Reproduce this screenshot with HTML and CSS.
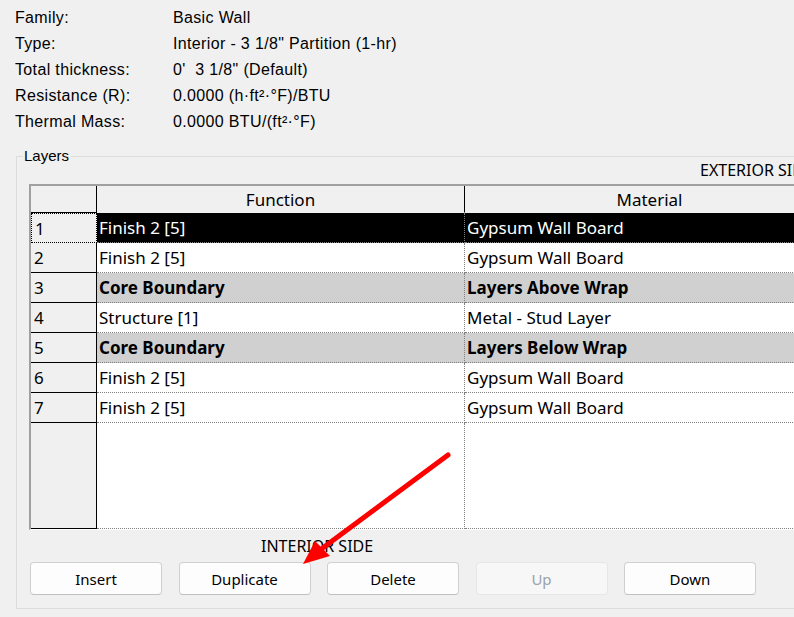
FILE: index.html
```html
<!DOCTYPE html>
<html lang="en">
<head>
  <meta charset="UTF-8">
  <title>Edit Assembly</title>
  <link rel="stylesheet" href="styles.css">
</head>
<body>

<!-- Свойства типа -->
<div class="info">
  <div class="info-row"><span class="info-label">Family:</span><span>Basic Wall</span></div>
  <div class="info-row"><span class="info-label">Type:</span><span>Interior - 3 1/8" Partition (1-hr)</span></div>
  <div class="info-row"><span class="info-label">Total thickness:</span><span>0'&nbsp; 3 1/8" (Default)</span></div>
  <div class="info-row"><span class="info-label">Resistance (R):</span><span>0.0000 (h·ft²·°F)/BTU</span></div>
  <div class="info-row"><span class="info-label">Thermal Mass:</span><span>0.0000 BTU/(ft²·°F)</span></div>
</div>

<!-- Слои -->
<fieldset class="layers">
  <legend>Layers</legend>
  <div class="side side-top">EXTERIOR SIDE</div>

  <table class="grid">
    <tr class="head">
      <th class="num"></th>
      <th class="func">Function</th>
      <th class="mat">Material</th>
    </tr>
    <tr class="selected">
      <td class="num focus">1</td>
      <td class="func">Finish 2 [5]</td>
      <td class="mat">Gypsum Wall Board</td>
    </tr>
    <tr>
      <td class="num">2</td>
      <td class="func">Finish 2 [5]</td>
      <td class="mat">Gypsum Wall Board</td>
    </tr>
    <tr class="core">
      <td class="num">3</td>
      <td class="func">Core Boundary</td>
      <td class="mat">Layers Above Wrap</td>
    </tr>
    <tr>
      <td class="num">4</td>
      <td class="func">Structure [1]</td>
      <td class="mat">Metal - Stud Layer</td>
    </tr>
    <tr class="core">
      <td class="num">5</td>
      <td class="func">Core Boundary</td>
      <td class="mat">Layers Below Wrap</td>
    </tr>
    <tr>
      <td class="num">6</td>
      <td class="func">Finish 2 [5]</td>
      <td class="mat">Gypsum Wall Board</td>
    </tr>
    <tr>
      <td class="num">7</td>
      <td class="func">Finish 2 [5]</td>
      <td class="mat">Gypsum Wall Board</td>
    </tr>
    <tr class="filler">
      <td class="num"></td>
      <td class="func"></td>
      <td class="mat"></td>
    </tr>
  </table>

  <div class="side side-bottom">INTERIOR SIDE</div>

  <div class="buttons">
    <button class="btn">Insert</button>
    <button class="btn">Duplicate</button>
    <button class="btn">Delete</button>
    <button class="btn" disabled>Up</button>
    <button class="btn">Down</button>
  </div>
</fieldset>

<!-- Стрелка-указатель -->
<svg class="arrow" width="794" height="617" viewBox="0 0 794 617">
  <line x1="448" y1="455" x2="320" y2="550" stroke="#ff0000" stroke-width="5" stroke-linecap="round"/>
  <polygon points="303,564 315,541 330,556" fill="#ff0000"/>
</svg>

</body>
</html>
```

FILE: styles.css
```css
/* Основные стили */
body {
  margin: 0;
  width: 794px;
  height: 617px;
  overflow: hidden;
  background-color: #f0f0f0;
  color: #000;
  font-family: "Liberation Sans", Arial, sans-serif;
  position: relative;
}

/* Свойства типа */
.info {
  padding: 5px 0 0 15px;
}
.info-row {
  display: flex;
  height: 26px;
  align-items: center;
  font-size: 16px;
  letter-spacing: 0.35px;
}
.info-label {
  width: 158px;
}

/* Группа слоёв */
.layers {
  margin: 12px 0 0 16px;
  padding: 0;
  width: 900px;
  height: 462px;
  border: 1px solid #dcdcdc;
  box-sizing: border-box;
}
.layers legend {
  margin-left: 6px;
  padding: 0 2px 0 1px;
  font-size: 15px;
  line-height: 18px;
}

.side {
  font-family: "Noto Sans", sans-serif;
  font-size: 16px;
  line-height: 20px;
}
.side-top {
  padding-left: 683px;
  margin-top: -5px;
}
.side-bottom {
  padding-left: 244px;
  margin-top: 6px;
}

/* Таблица слоёв */
.grid {
  margin: 4px 0 0 12px;
  border-collapse: separate;
  border-spacing: 0;
  border-top: 2px solid #a0a0a0;
  border-left: 2px solid #a0a0a0;
  border-bottom: 1px solid #ffffff;
  font-family: "Noto Sans", sans-serif;
  font-size: 17px;
  table-layout: fixed;
  background-color: #fff;
}
.grid th, .grid td {
  padding: 0 2px;
  height: 29px;
  box-sizing: border-box;
  text-align: left;
  white-space: nowrap;
  border-bottom: 1px dotted #808080;
  border-right: 1px dotted #808080;
}
.grid th {
  height: 27px;
  font-weight: normal;
  text-align: center;
  background-color: #f0f0f0;
  border-bottom: 1px solid #f0f0f0;
  border-right: 1px solid #000;
}
.grid .num {
  width: 66px;
  padding-left: 3px;
  background-color: #f0f0f0;
  border-right: 1px solid #000;
  border-bottom: 1px solid #000;
}
.grid .func {
  width: 368px;
}
.grid .mat {
  width: 370px;
}
.grid td {
  height: 30px;
}
.grid .focus {
  border: 1px dotted #000;
}
.selected td.func, .selected td.mat {
  background-color: #000;
  color: #fff;
}
.core td.func, .core td.mat {
  background-color: #d0d0d0;
  font-weight: bold;
}
.grid .filler td {
  height: 106px;
}

/* Кнопки */
.buttons {
  display: flex;
  gap: 16.5px;
  margin: 6px 0 0 13px;
}
.btn {
  width: 132px;
  height: 33px;
  background-color: #fdfdfd;
  border: 1px solid #d0d0d0;
  border-bottom-color: #c0c0c0;
  border-radius: 4px;
  font-family: "Noto Sans", sans-serif;
  font-size: 15px;
  color: #000;
  padding: 0;
}
.btn:disabled {
  background-color: #f7f7f7;
  border-color: #e6e6e6;
  color: #9ca3aa;
}

/* Стрелка */
.arrow {
  position: absolute;
  left: 0;
  top: 0;
  pointer-events: none;
}
```
